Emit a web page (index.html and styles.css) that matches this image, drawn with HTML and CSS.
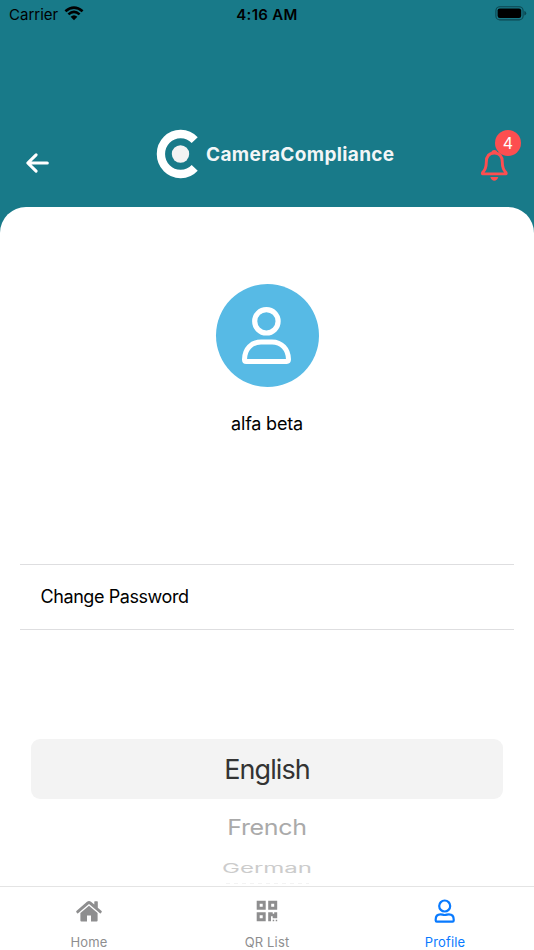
FILE: index.html
```
<!DOCTYPE html>
<html>
	<head>
		<meta charset="utf-8" />
		<title>Profile</title>
		<link rel="stylesheet" href="styles.css">
	</head>
	<body>
		<div class="status">
			<div class="carrier">
				<span>Carrier</span>
				<svg width="20" height="15" viewBox="0 0 20 15">
					<path d="M1.4 5.3Q10-2.2 18.6 5.3M4.4 8.4Q10 3.4 15.6 8.4" fill="none" stroke="#000" stroke-width="2.6"/>
					<path d="M6.6 10.8Q10 7.8 13.4 10.8L10 14.2Z"/>
				</svg>
			</div>
			<span class="time">4:16 AM</span>
			<svg class="battery" width="32" height="15" viewBox="0 0 32 15">
				<rect x=".9" y=".7" width="27.2" height="13.2" rx="4" fill="none" stroke="#0c4650" stroke-width="1.1"/>
				<rect x="2.6" y="2.4" width="23.6" height="9.6" rx="2.2"/>
				<path d="M29.3 5Q31.2 5.4 31.2 7.3T29.3 9.6Z" fill="#0c4650"/>
			</svg>
		</div>

		<div class="header">
			<svg class="back" width="24" height="20" viewBox="0 0 24 20">
				<path d="M11.1 1.8L2.8 10L11.1 18.2M3.5 10H22.3" fill="none" stroke="#fff" stroke-width="3.1" stroke-linecap="round" stroke-linejoin="round"/>
			</svg>
			<div class="logo">
				<svg width="42" height="50" viewBox="0 0 42 50">
					<path d="M37.7 11.2A19.6 20 0 1 0 37.7 38.8" fill="none" stroke="#fff" stroke-width="8.3"/>
					<circle cx="23.5" cy="25" r="8.7" fill="#f3f3f3"/>
				</svg>
				<span>CameraCompliance</span>
			</div>
			<div class="bell">
				<svg width="28" height="32" viewBox="0 0 28 32">
					<path d="M14.3 3C8.3 3 6.3 7.5 6.3 12.3C6.3 18 5.3 20 2.6 22.6Q2.1 23.9 2.8 23.9H25.8Q26.5 23.9 26 22.6C23.3 20 22.3 18 22.3 12.3C22.3 7.5 20.3 3 14.3 3Z" fill="none" stroke="#fd4e50" stroke-width="2.9" stroke-linejoin="round"/>
					<path d="M11 3.2Q11.6 0 14.3 0T17.6 3.2ZM10.3 27H18.3Q17 30.8 14.3 30.8T10.3 27Z" fill="#fd4e50"/>
				</svg>
				<span class="badge">4</span>
			</div>
		</div>

		<div class="card">
			<div class="avatar">
				<svg width="52" height="60" viewBox="0 0 52 60">
					<circle cx="25.4" cy="16.3" r="11.7" fill="none" stroke="#fff" stroke-width="5.2"/>
					<path d="M3.5 54.4C3.7 44 10.5 37 20 37H31C40.5 37 47.3 44 47.5 54.4Q47.5 56.4 45.8 56.4H5.2Q3.5 56.4 3.5 54.4Z" fill="none" stroke="#fff" stroke-width="5" stroke-linejoin="round"/>
				</svg>
			</div>
			<p class="name">alfa beta</p>
			<div class="password"><span>Change Password</span></div>
			<div class="picker">
				<div class="selected"><span>English</span></div>
				<div class="second"><span>French</span></div>
				<div class="third"><span>German</span></div>
				<div class="edge"></div>
			</div>
		</div>

		<div class="tabs">
			<div class="tab">
				<svg width="28" height="26" viewBox="0 0 28 26">
					<path d="M14 1.9Q15 1.9 16 2.7L19.3 5.6V2.9Q19.3 2.3 19.9 2.3H22.2Q22.8 2.3 22.8 2.9V8.7L26.6 12Q27.1 12.6 26.6 13.2L25.8 14.2Q25.2 14.6 24.6 14.1L14 5L3.4 14.1Q2.8 14.6 2.2 14.2L1.4 13.2Q.9 12.6 1.4 12L12 2.7Q13 1.9 14 1.9Z"/>
					<path d="M14 6.7L22.6 14.1V21.5Q22.6 22.5 21.6 22.5H16V16.5H12V22.5H6.4Q5.4 22.5 5.4 21.5V14.1Z"/>
				</svg>
				<span>Home</span>
			</div>
			<div class="tab qr">
				<svg width="28" height="26" viewBox="0 0 28 26">
					<path fill-rule="evenodd" d="M3.7 1.7H12.7V10.7H3.7ZM6.7 4.7V7.7H9.7V4.7ZM15.2 1.7H24.2V10.7H15.2ZM18.2 4.7V7.7H21.2V4.7ZM3.7 13.2H12.7V22.2H3.7ZM6.7 16.2V19.2H9.7V16.2ZM15.2 13.2H19.7V14.7H21.2V13.2H24.2V19.2H19.7V17.2H18V22.2H15.2ZM19.7 20.7H21.2V22.2H19.7ZM22.7 20.7H24.2V22.2H22.7Z"/>
				</svg>
				<span>QR List</span>
			</div>
			<div class="tab active">
				<svg width="28" height="26" viewBox="0 0 28 26">
					<path d="M13.7 1.5A5.5 5.5 0 1 1 13.7 12.5A5.5 5.5 0 1 1 13.7 1.5ZM9.5 15.3C11.5 15.3 11.6 16 13.7 16S15.9 15.3 17.9 15.3C21.5 15.3 22.7 17.9 22.7 20.5V21.6Q22.7 22.7 21.6 22.7H5.8Q4.7 22.7 4.7 21.6V20.5C4.7 17.9 5.9 15.3 9.5 15.3Z" fill="none" stroke="#087aff" stroke-width="2.2"/>
				</svg>
				<span>Profile</span>
			</div>
		</div>
	</body>
</html>
```

FILE: styles.css
```
* {
	margin: 0;
	padding: 0;
	box-sizing: border-box;
}

body {
	height: 950px;
	display: flex;
	flex-direction: column;
	background: #187a89;
	font-family: Inter, "Liberation Sans", sans-serif;
	color: #000;
	overflow: hidden;
}

svg {
	display: block;
	flex: none;
	overflow: visible;
}

span {
	white-space: nowrap;
}

/* status bar */
.status {
	height: 28px;
	display: grid;
	grid-template-columns: 1fr auto 1fr;
	align-items: center;
	padding: 0 7px 0 9px;
	font-size: 15px;
}

.carrier {
	display: flex;
	align-items: center;
	gap: 6px;
}

.carrier svg {
	margin-top: -2px;
}

.time {
	margin-right: 2px;
	font-weight: 600;
	letter-spacing: .3px;
}

.battery {
	justify-self: end;
	margin-top: -1px;
}

/* header */
.header {
	height: 179px;
	display: flex;
	justify-content: space-between;
	padding: 101px 26px 0 25px;
}

.back {
	margin-top: 24px;
}

.logo {
	width: 238px;
	display: flex;
	height: 50px;
	margin-left: 23px;
	align-items: center;
	gap: 7px;
	color: #f3f6f7;
	font-size: 19px;
	font-weight: 700;
	letter-spacing: .35px;
}

.bell {
	position: relative;
	margin-top: 21px;
}

.badge {
	position: absolute;
	left: 15px;
	top: -20px;
	width: 26px;
	height: 26px;
	border-radius: 50%;
	background: #fd4e50;
	color: #fff;
	font-size: 16px;
	line-height: 27px;
	text-align: center;
}

/* white sheet */
.card {
	flex: 1;
	display: flex;
	flex-direction: column;
	align-items: center;
	padding-top: 77px;
	background: #fff;
	border-radius: 26px 26px 0 0;
	overflow: hidden;
}

.avatar {
	flex: none;
	width: 103px;
	height: 103px;
	display: flex;
	justify-content: center;
	padding-top: 21px;
	border-radius: 50%;
	background: #57bae5;
}

.name {
	margin-top: 25px;
	font-size: 18px;
	line-height: 24px;
	letter-spacing: -.2px;
}

.password {
	flex: none;
	width: 494px;
	height: 66px;
	margin-top: 128px;
	padding-left: 20.5px;
	border-top: 1px solid #dedee0;
	border-bottom: 1px solid #dedee0;
	font-size: 18px;
	line-height: 64px;
	letter-spacing: -.42px;
}

/* language wheel */
.picker {
	width: 472px;
	margin-top: 109px;
	text-align: center;
}

.picker span {
	display: inline-block;
}

.selected {
	height: 60px;
	border-radius: 9px;
	background: #f3f3f3;
	color: #333;
	font-size: 27px;
	line-height: 61px;
	letter-spacing: -.9px;
}

.second {
	height: 56px;
	color: #aaa;
	font-size: 25px;
	line-height: 56px;
	letter-spacing: -.3px;
}

.second span {
	transform: scaleY(.87);
}

.third {
	height: 26px;
	color: #ccc;
	font-size: 24px;
	line-height: 27px;
}

.third span {
	transform: scaleY(.54);
}

.edge {
	width: 83px;
	height: 1px;
	margin: 2px auto 0;
	background: repeating-linear-gradient(90deg, #f3f3f3 0 4px, #fff 4px 8px);
}

/* bottom tabs */
.tabs {
	height: 64px;
	display: flex;
	background: #fff;
	border-top: 1px solid #e4e4e4;
}

.tab {
	flex: 1;
	display: flex;
	flex-direction: column;
	align-items: center;
	padding-top: 12px;
	color: #8e8e8f;
	fill: #8e8e8f;
	font-size: 13px;
}

.tab span {
	margin-top: 9px;
	line-height: 16px;
	letter-spacing: .15px;
}

.active {
	color: #087aff;
}
```
